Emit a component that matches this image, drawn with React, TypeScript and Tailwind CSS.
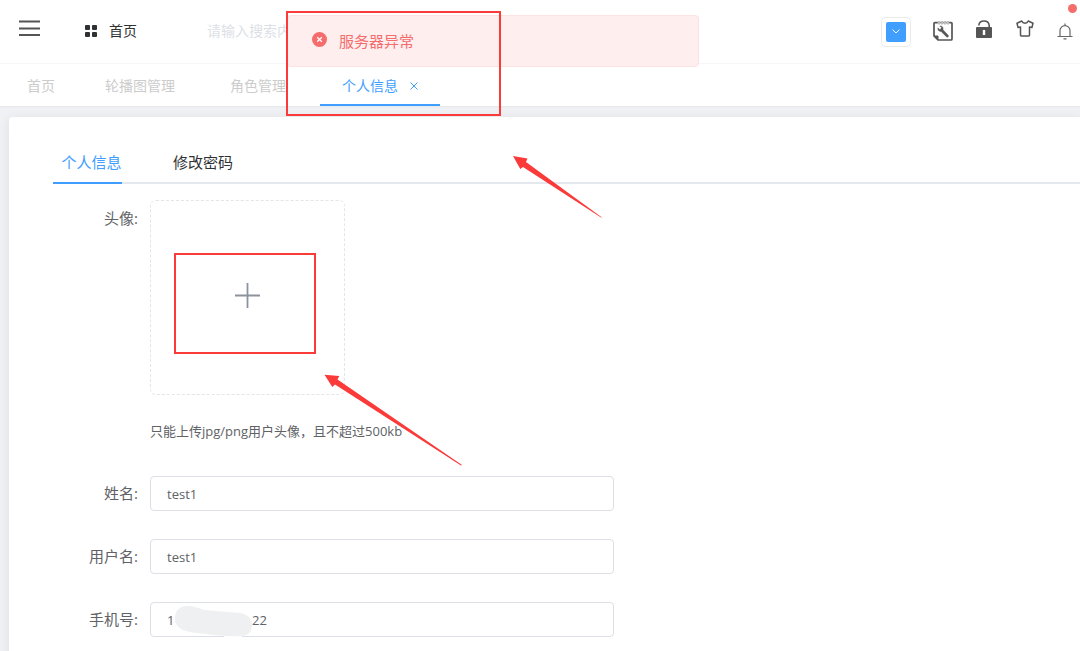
import React, { useState } from "react";

const tags = [
  { name: "首页", className: "w-[78px] pl-[27px]" },
  { name: "轮播图管理", className: "w-[126px] pl-[27px]" },
  { name: "角色管理", className: "w-[116px] pl-[26px]" },
];

const fields = [
  { id: "name", label: "姓名:", value: "test1" },
  { id: "username", label: "用户名:", value: "test1" },
  { id: "phone", label: "手机号:", value: "1" + "\u00a0".repeat(23) + "22" },
];

const MenuIcon = () => (
  <svg width="21" height="16" viewBox="0 0 21 16" stroke="#555" strokeWidth="1.8">
    <path d="M0 1.5h21M0 8.5h21M0 15h21" />
  </svg>
);

const GridIcon = () => (
  <svg width="12" height="12" viewBox="0 0 12 12" fill="#303133">
    <rect width="5" height="5" rx="1" />
    <rect x="7" width="5" height="5" rx="1" />
    <rect y="7" width="5" height="5" rx="1" />
    <rect x="7" y="7" width="5" height="5" rx="1" />
  </svg>
);

const LogIcon = () => (
  <svg width="20" height="20" viewBox="0 0 20 20" fill="none" stroke="#555">
    <path d="M2 1.6h16a1 1 0 0 1 1 1V18a1 1 0 0 1-1 1H5l-4-4V2.6a1 1 0 0 1 1-1z" strokeWidth="1.7" />
    <path d="M1 15h4v4z" fill="#555" strokeWidth="1" />
    <path d="M6 0v3.6M9 0v3.6M12 0v3.6M15 0v3.6" stroke="#fff" strokeWidth="2.4" />
    <path d="M6 0v3.6M9 0v3.6M12 0v3.6M15 0v3.6" stroke="#888" strokeWidth="1.1" />
    <path
      d="M6.8 5 8.4 6.6 8 8 6.5 8.4 4.9 6.8C4.3 8.7 5.8 10.8 8.1 10.4L13.6 16C14.6 16.8 16.2 15.4 15.2 14.2L10 8.8C10.7 6.4 9 4.4 6.8 5Z"
      fill="#555"
      strokeWidth="0.4"
    />
  </svg>
);

const LockIcon = () => (
  <svg width="16" height="18" viewBox="0 0 16 18">
    <path d="M2.8 5.5C3 2.6 5.2 1 8 1s5 1.6 5.2 4.5V8" fill="none" stroke="#555" strokeWidth="1.6" />
    <path d="M1 7h14a1 1 0 0 1 1 1v9a1 1 0 0 1-1 1H1a1 1 0 0 1-1-1V8a1 1 0 0 1 1-1z" fill="#555" />
    <rect x="6.8" y="10" width="2.4" height="5" fill="#fff" />
  </svg>
);

const ShirtIcon = () => (
  <svg width="18" height="17" viewBox="0 0 18 17" fill="none" stroke="#555" strokeWidth="1.5" strokeLinejoin="round">
    <path d="M5.7 1 1 3.2l1.1 4.4 2.4-.5v8.2c0 .5.3.7.7.7h7.6c.4 0 .7-.2.7-.7V7.1l2.4.5L17 3.2 12.3 1C11.6 2.6 10.5 3.2 9 3.2S6.4 2.6 5.7 1z" />
  </svg>
);

const BellIcon = () => (
  <svg width="16" height="17" viewBox="0 0 16 17" fill="none" stroke="#666" strokeWidth="1.2">
    <path d="M3 13.4V7.6a5 5 0 0 1 10 0v5.8M0.5 13.5h15M8 0.6v2M6.5 15.8h3" />
  </svg>
);

const Header = () => (
  <header className="flex h-16 items-center border-b border-[#f7f7f9] pl-[19px] pr-[7px]">
    <button aria-label="菜单" className="mb-2 w-[66px]">
      <MenuIcon />
    </button>
    <a href="#home" className="mb-0.5 flex items-center gap-3 text-sm text-[#303133]">
      <GridIcon />
      首页
    </a>
    <input
      aria-label="搜索"
      placeholder="请输入搜索内容"
      className="mb-0.5 ml-[70px] min-w-0 flex-1 text-sm outline-none placeholder:text-[#dcdfe6]"
    />
    <div className="flex shrink-0 items-center">
      <button
        aria-label="展开"
        className="flex size-[30px] items-center justify-center rounded border border-[#ebebeb]"
      >
        <span className="flex size-5 items-center justify-center rounded-xs bg-[#409eff]">
          <svg width="8" height="5" viewBox="0 0 8 5" fill="none" stroke="#fff">
            <path d="M0.5 0.5 4 4 7.5 0.5" />
          </svg>
        </span>
      </button>
      <button aria-label="日志" className="mb-0.5 ml-[22px]">
        <LogIcon />
      </button>
      <button aria-label="锁屏" className="mb-1.5 ml-[23px]">
        <LockIcon />
      </button>
      <button aria-label="主题" className="mb-1.5 ml-6">
        <ShirtIcon />
      </button>
      <button aria-label="消息" className="relative ml-[23px]">
        <BellIcon />
        <span className="absolute -right-1 -top-[19px] size-[9px] rounded-full bg-[#f56c6c]" />
      </button>
    </div>
  </header>
);

const TagsBar = () => (
  <nav className="relative flex h-[42px] text-sm text-[#cccccc] shadow-xs">
    {tags.map((tag) => (
      <a key={tag.name} href="#tag" className={`${tag.className} shrink-0 pt-3 leading-5 whitespace-nowrap`}>
        {tag.name}
      </a>
    ))}
    <div className="flex w-[120px] shrink-0 items-start justify-center gap-3 border-b-2 border-[#409eff] pt-3 text-[#409eff]">
      <a href="#profile" className="leading-5">
        个人信息
      </a>
      <button aria-label="关闭" className="flex h-5 items-center">
        <svg width="8" height="8" viewBox="0 0 8 8" stroke="#409eff" strokeWidth="1">
          <path d="M0.5 0.5l7 7M7.5 0.5l-7 7" />
        </svg>
      </button>
    </div>
  </nav>
);

const Toast = () => (
  <div
    role="alert"
    className="absolute left-[287px] top-[15px] flex h-[52px] w-[412px] items-center gap-3 rounded border border-[#fde2e2] bg-[#feeeee] pl-6 text-[15px] text-[#f56c6c]"
  >
    <svg width="15" height="15" viewBox="0 0 15 15" className="mb-1">
      <circle cx="7.5" cy="7.5" r="7.5" fill="#f56c6c" />
      <path d="M5.2 5.2l4.6 4.6M9.8 5.2L5.2 9.8" stroke="#fff" strokeWidth="1.3" />
    </svg>
    服务器异常
  </div>
);

// red marker boxes and arrows drawn over the page
const Annotations = () => (
  <div className="pointer-events-none absolute inset-0">
    <div className="absolute left-[286px] top-[11px] h-[105px] w-[215px] border-2 border-[#fb3a3a]" />
    <div className="absolute left-[174px] top-[253px] h-[101px] w-[142px] border-2 border-[#fb3a3a]" />
    <svg className="absolute left-0 top-0" width="640" height="480" viewBox="0 0 640 480" fill="#fb3a3a">
      <path d="M513 156 527.5 158.5 526 162 602 217.5 601 217.5 523 167 520.3 169z" />
      <path d="M324.5 374.8 339.3 376 337.5 379.5 462 465 461 465.5 335 384.5 332.3 387z" />
    </svg>
  </div>
);

const App = () => {
  const [tab, setTab] = useState("info");
  const tabClass = (name: string) =>
    tab === name ? "border-[#409eff] text-[#409eff]" : "border-transparent text-[#303133]";

  return (
    <div className="relative h-screen overflow-hidden bg-white font-['Open_Sans','Noto_Sans_CJK_SC',sans-serif] text-[#606266]">
      <Header />
      <TagsBar />
      <main className="min-h-full bg-[#eff1f5] pl-[9px] pt-[11px]">
        <section className="min-h-screen rounded-tl bg-white pl-11 pt-[26px] shadow-[0_2px_12px_rgba(0,0,0,0.08)]">
          <div role="tablist" className="flex h-[41px] border-b-2 border-[#e4e7ed] text-[15px]">
            <button
              role="tab"
              aria-selected={tab === "info"}
              onClick={() => setTab("info")}
              className={`-mb-0.5 w-[69px] border-b-2 pl-2 pb-px whitespace-nowrap ${tabClass("info")}`}
            >
              个人信息
            </button>
            <button
              role="tab"
              aria-selected={tab === "password"}
              onClick={() => setTab("password")}
              className={`-mb-0.5 ml-[51px] border-b-2 pb-px ${tabClass("password")}`}
            >
              修改密码
            </button>
          </div>
          <form className="flex flex-col gap-7 pt-4">
            <div className="flex gap-3">
              <label htmlFor="avatar" className="w-[85px] pt-2 text-right text-[15px] leading-5">
                头像:
              </label>
              <div>
                <button
                  id="avatar"
                  type="button"
                  className="flex size-[195px] items-center justify-center rounded-md border border-dashed border-[#e4e5e8] pb-1"
                >
                  <svg width="25" height="25" viewBox="0 0 25 25" stroke="#8c939d" strokeWidth="1.8">
                    <path d="M0 12.5h25M12.5 0v25" />
                  </svg>
                </button>
                <p className="mt-[26px] mb-[7px] text-[13px] leading-5">只能上传jpg/png用户头像，且不超过500kb</p>
              </div>
            </div>
            {fields.map((field) => (
              <div key={field.id} className="flex items-center gap-3">
                <label htmlFor={field.id} className="w-[85px] text-right text-[15px]">
                  {field.label}
                </label>
                <div className="relative w-[464px]">
                  <input
                    id={field.id}
                    defaultValue={field.value}
                    className="h-[35px] w-full rounded border border-[#dcdfe6] px-4 text-[13px] outline-none focus:border-[#409eff]"
                  />
                  {field.id === "phone" && (
                    <svg className="absolute left-6 top-1" width="79" height="32" viewBox="0 0 79 32">
                      <rect x="50" y="29" width="18" height="3" fill="#fff" />
                      <path
                        d="M1 12C1 4 6 0 14 0 20 0 24 2 30 4L66 7C74 8 78 13 78 19 78 26 74 30 66 30 50 31 34 28 24 27 9 26 0 21 1 12z"
                        fill="#eff0f1"
                      />
                    </svg>
                  )}
                </div>
              </div>
            ))}
          </form>
        </section>
      </main>
      <Toast />
      <Annotations />
    </div>
  );
};

export default App;
